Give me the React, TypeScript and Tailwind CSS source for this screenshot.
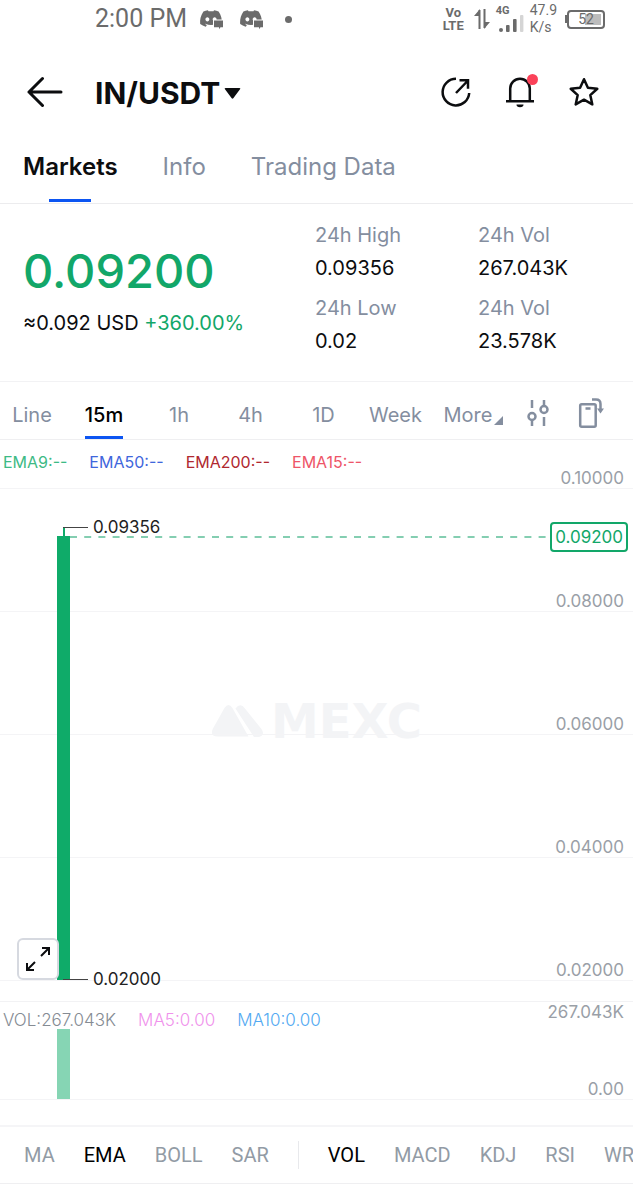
import { useState } from 'react';
import type { ReactNode } from 'react';
import clsx from 'clsx';
import { FaDiscord } from 'react-icons/fa';

const tabs = ['Markets', 'Info', 'Trading Data'];

const stats = [
  { label: '24h High', value: '0.09356' },
  { label: '24h Vol', value: '267.043K' },
  { label: '24h Low', value: '0.02' },
  { label: '24h Vol', value: '23.578K' },
];

const intervals = ['Line', '15m', '1h', '4h', '1D', 'Week'];

const emas = [
  { text: 'EMA9:--', color: 'text-[#3dba85]' },
  { text: 'EMA50:--', color: 'text-[#3f66dc]' },
  { text: 'EMA200:--', color: 'text-[#b0282f]' },
  { text: 'EMA15:--', color: 'text-[#ee5568]' },
];

const priceLevels = ['0.08000', '0.06000', '0.04000', '0.02000'];

const mainIndicators = ['MA', 'EMA', 'BOLL', 'SAR'];
const subIndicators = ['VOL', 'MACD', 'KDJ', 'RSI', 'WR'];

function DiscordNotice() {
  return (
    <span className="relative flex h-5 w-6">
      <FaDiscord className="h-[19px] w-6" />
      <svg
        viewBox="0 0 12 11"
        className="absolute -right-px -bottom-px h-[11px] w-3"
      >
        <path
          d="M2 1.5h9v6.8H8.5L7 10.2V8.3H2z"
          fill="currentColor"
          stroke="#fff"
          strokeWidth="2"
          paintOrder="stroke"
        />
      </svg>
    </span>
  );
}

function StatusBar() {
  return (
    <div className="flex h-[38px] items-center pr-7 pl-[95px] font-['Roboto',sans-serif] text-[#6b6b6b]">
      <span className="text-[25px] leading-8">2:00 PM</span>
      <div className="ml-3 flex items-center gap-4">
        <DiscordNotice />
        <DiscordNotice />
      </div>
      <span className="ml-[22px] size-[7px] rounded-full bg-[#6b6b6b]" />
      <div className="ml-auto flex items-center">
        <div className="flex flex-col items-center text-[13px] leading-[13px] font-bold">
          <span>Vo</span>
          <span>LTE</span>
        </div>
        <svg viewBox="0 0 16 22" className="ml-[10px] h-[22px] w-4">
          <path
            d="M5.5 21V2M10.5 1v19"
            fill="none"
            stroke="currentColor"
            strokeWidth="2"
          />
          <path d="M6 1v7H0zM10 21v-7h6z" fill="currentColor" />
        </svg>
        <div className="ml-[6px] flex flex-col">
          <span className="text-[11px] leading-[10px] font-bold">4G</span>
          <svg viewBox="0 0 28 18" className="-mt-px h-[18px] w-7">
            <circle cx="5" cy="15" r="2" fill="currentColor" />
            <rect x="10" y="10" width="3.6" height="7" rx="1" fill="currentColor" />
            <rect x="17" y="4" width="3.6" height="13" rx="1" fill="currentColor" />
            <rect x="24" y="0" width="3.4" height="17" rx="1" fill="#d5d5d5" />
          </svg>
        </div>
        <div className="ml-[6px] flex flex-col text-sm leading-[17px]">
          <span>47.9</span>
          <span>K/s</span>
        </div>
        <div className="ml-2 flex items-center">
          <span className="h-2 w-[2px] bg-[#6b6b6b]" />
          <span className="relative flex h-[19px] w-[38px] items-center justify-center rounded border-2 border-[#6b6b6b] text-sm">
            <span className="absolute inset-y-[2px] right-[2px] w-[16px] bg-[#bcbcbc]" />
            <span className="relative">52</span>
          </span>
        </div>
      </div>
    </div>
  );
}

function Header() {
  return (
    <header className="flex h-[108px] items-center pr-[33px] pl-[27px]">
      <button type="button" aria-label="Back">
        <svg
          viewBox="0 0 36 32"
          className="h-8 w-9"
          fill="none"
          stroke="currentColor"
          strokeWidth="3"
          strokeLinecap="round"
          strokeLinejoin="round"
        >
          <path d="M15.5 2.5 2 16l13.500 13.500M2 16h32" />
        </svg>
      </button>
      <button type="button" className="ml-8 flex items-center gap-1 pt-[2px]">
        <span className="text-[30px] leading-9 font-bold">IN/USDT</span>
        <svg viewBox="0 0 17 11" className="h-[11px] w-[17px]">
          <path d="M1.500 0h14q1.500 0 .5 1.300L9.300 10.200q-.8.900-1.600 0L1 1.300Q0 0 1.500 0z" fill="currentColor" />
        </svg>
      </button>
      <div className="ml-auto flex gap-8">
        <button type="button" aria-label="Share">
          <svg viewBox="0 0 32 32" className="size-8" fill="none" stroke="currentColor" strokeWidth="2.500">
            <path d="M16 2.800A13.300 13.300 0 1 0 29.200 17" />
            <path d="M16 17 27.500 5M19.500 4.300h8.500v8.500" />
          </svg>
        </button>
        <button type="button" aria-label="Alerts" className="relative">
          <svg viewBox="0 0 32 32" className="size-8" fill="none" stroke="currentColor" strokeWidth="2.500">
            <path d="M6.200 24.500V12.500a9.800 9.800 0 0 1 19.600 0v12M2 25.200h28" />
            <path d="M12.500 28.500h7a3.500 2.700 0 0 1-7 0z" fill="currentColor" stroke="none" />
          </svg>
          <span className="absolute -top-[2px] -right-[2px] size-[11px] rounded-full bg-[#fb4259]" />
        </button>
        <button type="button" aria-label="Favourite">
          <svg
            viewBox="0 0 32 32"
            className="size-8"
            fill="none"
            stroke="currentColor"
            strokeWidth="2.500"
            strokeLinejoin="round"
          >
            <path d="m16 3.200 3.900 8.600 9.400 1-7 6.300 2 9.300-8.300-4.700-8.300 4.700 2-9.300-7-6.300 9.400-1z" />
          </svg>
        </button>
      </div>
    </header>
  );
}

function Tabs() {
  const [active, setActive] = useState('Markets');

  return (
    <nav className="flex h-[58px] gap-[45px] border-b border-[#ececee] pl-[23px] text-2xl">
      {tabs.map(tab => (
        <button
          key={tab}
          type="button"
          onClick={() => setActive(tab)}
          className={clsx(
            'relative flex pt-[5px] leading-8',
            active === tab ? 'font-semibold' : 'text-[#848e9f]'
          )}
        >
          {tab}
          {active === tab && (
            <span className="absolute bottom-px left-1/2 h-[3px] w-[42px] -translate-x-1/2 bg-[#0c55f2]" />
          )}
        </button>
      ))}
    </nav>
  );
}

function Summary() {
  return (
    <section className="grid h-[178px] grid-cols-[315fr_318fr] border-b border-[#f2f2f4]">
      <div className="pt-10 pl-[23px]">
        <p className="text-[47px] leading-[54px] font-medium text-[#12a769]">
          0.09200
        </p>
        <p className="mt-[11px] text-xl leading-7">
          ≈0.092 USD <span className="text-[#12a769]">+360.00%</span>
        </p>
      </div>
      <dl className="grid grid-cols-[163fr_155fr] content-start gap-y-[7px] pt-[15px]">
        {stats.map((stat, i) => (
          <div key={i} className="flex flex-col text-xl leading-[33px]">
            <dt className="text-[#848e9f]">{stat.label}</dt>
            <dd>{stat.value}</dd>
          </div>
        ))}
      </dl>
    </section>
  );
}

function Intervals() {
  const [active, setActive] = useState('15m');

  return (
    <div className="grid h-[58px] grid-cols-[64fr_80fr_70fr_73fr_73fr_71fr_85fr_44fr_62fr_11fr] border-b border-[#efeff1] text-xl text-[#848e9f]">
      {intervals.map(item => (
        <button
          key={item}
          type="button"
          onClick={() => setActive(item)}
          className={clsx(
            'relative pt-2 text-center',
            active === item && 'font-medium text-black'
          )}
        >
          {item}
          {active === item && (
            <span className="absolute bottom-0 left-1/2 h-[3px] w-[38px] -translate-x-1/2 bg-[#0c55f2]" />
          )}
        </button>
      ))}
      <button type="button" className="flex items-center justify-center gap-[2px] pt-2">
        More
        <svg viewBox="0 0 9 9" className="mt-3 size-[9px]">
          <path d="M9 0v9H0z" fill="currentColor" />
        </svg>
      </button>
      <button type="button" aria-label="Chart settings" className="flex items-center justify-center pt-1">
        <svg viewBox="0 0 24 28" className="h-7 w-6" fill="none" stroke="currentColor" strokeWidth="2.500">
          <path d="M6 1v8M6 21v6M18 1v6M18 18v9" />
          <circle cx="6" cy="17.500" r="3.500" />
          <circle cx="18" cy="10.500" r="3.500" />
        </svg>
      </button>
      <button type="button" aria-label="Rotate screen" className="flex items-center justify-center pt-1">
        <svg viewBox="0 0 26 32" className="h-8 w-[26px]" fill="none" stroke="currentColor" strokeWidth="2.500">
          <rect x="2.200" y="7.200" width="15.500" height="22.500" rx="1.500" />
          <path d="M7.500 11.500h5M14 2.500h4q4.500 0 4.500 4.500v7" />
          <path d="M19 11.500h7l-3.500 5z" fill="currentColor" stroke="none" />
        </svg>
      </button>
    </div>
  );
}

function Watermark() {
  return (
    <div className="absolute top-[259px] left-1/2 flex h-11 -translate-x-1/2 items-center gap-2 text-[#f3f4f6]">
      <svg viewBox="0 0 52 32" className="h-8 w-[52px]" fill="currentColor">
        <path d="M13 3q4-6 8 0l16 28.500H6Q-2 31 1.500 23.500z" />
        <path d="M24 3.500q5-6.500 9.500 0L50 24q4 6-2.500 8h-5z" />
      </svg>
      <span className="font-['DejaVu_Sans',sans-serif] text-[48px] leading-[44px] font-bold">
        MEXC
      </span>
    </div>
  );
}

function PriceTick({ children }: { children: ReactNode }) {
  return (
    <div className="flex items-center gap-[5px] text-[17px] leading-5 text-[#222]">
      <span className="h-px w-[25px] bg-[#444]" />
      {children}
    </div>
  );
}

function PriceChart() {
  return (
    <section className="relative border-b border-[#f2f2f4] pb-5 text-[17px]">
      <Watermark />
      <div className="relative flex h-[49px] justify-between border-b border-[#f4f4f6] pr-[9px] pl-[3px]">
        <ul className="flex gap-[22px] pt-3 text-base leading-5">
          {emas.map(ema => (
            <li key={ema.text} className={ema.color}>
              {ema.text}
            </li>
          ))}
        </ul>
        <span className="self-end leading-5 text-[#9a9fa7]">0.10000</span>
      </div>
      {priceLevels.map(level => (
        <div
          key={level}
          className="relative flex h-[123px] items-end justify-end border-b border-[#f4f4f6] pr-[9px] leading-5 text-[#9a9fa7]"
        >
          {level}
        </div>
      ))}

      {/* candle with its high / low marks */}
      <div className="absolute top-[96px] left-[57px] h-[444px] w-[13px] bg-[#0fab69]" />
      <div className="absolute top-[87px] left-[63px] h-[9px] w-[2px] bg-[#0fab69]" />
      <div className="absolute top-[77px] left-[63px]">
        <PriceTick>0.09356</PriceTick>
      </div>
      <div className="absolute top-[529px] left-[63px]">
        <PriceTick>0.02000</PriceTick>
      </div>

      {/* last price */}
      <div className="absolute top-[82px] right-[5px] left-[70px] flex items-center">
        <svg className="h-[2px] grow" aria-hidden="true">
          <line x1="0" y1="1" x2="100%" y2="1" stroke="#5cbf98" strokeWidth="1.500" strokeDasharray="7 7.200" />
        </svg>
        <span className="rounded border-2 border-[#12a769] bg-white px-[3px] py-[2px] leading-[22px] text-[#12a769]">
          0.09200
        </span>
      </div>

      <button
        type="button"
        aria-label="Full screen"
        className="absolute bottom-[21px] left-[17px] flex h-[42px] w-[42px] items-center justify-center rounded-md border-2 border-[#d6d9e0] bg-white"
      >
        <svg viewBox="0 0 26 26" className="size-[26px]" fill="none" stroke="currentColor" strokeWidth="2">
          <path d="m16 10 7.500-7.500M17 2h7v7M10 16l-7.500 7.500M2 17v7h7" />
        </svg>
      </button>
    </section>
  );
}

function VolumeChart() {
  return (
    <section className="h-[125px] border-b-2 border-[#f5f5f7]">
      <div className="relative flex h-[98px] justify-between border-b border-[#f4f4f6] pr-[9px] pl-[3px] text-[17px] leading-5 text-[#9a9fa7]">
        <div className="absolute bottom-0 left-[57px] h-[70px] w-[13px] bg-[#86d5b4]" />
        <ul className="relative flex gap-[22px] pt-2 font-light">
          <li className="text-[#858b93]">VOL:267.043K</li>
          <li className="text-[#f092ec]">MA5:0.00</li>
          <li className="text-[#52a9f2]">MA10:0.00</li>
        </ul>
        <div className="flex flex-col items-end justify-between">
          <span>267.043K</span>
          <span>0.00</span>
        </div>
      </div>
    </section>
  );
}

type IndicatorProps = { name: string; active: boolean; onSelect: () => void };

function Indicator({ name, active, onSelect }: IndicatorProps) {
  return (
    <button
      type="button"
      onClick={onSelect}
      className={active ? 'text-black' : 'text-[#929ba5]'}
    >
      {name}
    </button>
  );
}

function IndicatorBar() {
  const [main, setMain] = useState('EMA');
  const [sub, setSub] = useState('VOL');

  return (
    <div className="flex h-[57px] items-center gap-[29px] overflow-hidden border-b border-[#efeff1] pl-6 font-['Roboto',sans-serif] text-xl">
      {mainIndicators.map(name => (
        <Indicator key={name} name={name} active={main === name} onSelect={() => setMain(name)} />
      ))}
      <span className="h-7 w-px shrink-0 bg-[#e8e9ec]" />
      {subIndicators.map(name => (
        <Indicator key={name} name={name} active={sub === name} onSelect={() => setSub(name)} />
      ))}
    </div>
  );
}

export default function App() {
  return (
    <main className="min-h-screen overflow-hidden bg-white font-['Inter',sans-serif] text-[#0c0d0f]">
      <StatusBar />
      <Header />
      <Tabs />
      <Summary />
      <Intervals />
      <PriceChart />
      <VolumeChart />
      <IndicatorBar />
    </main>
  );
}
